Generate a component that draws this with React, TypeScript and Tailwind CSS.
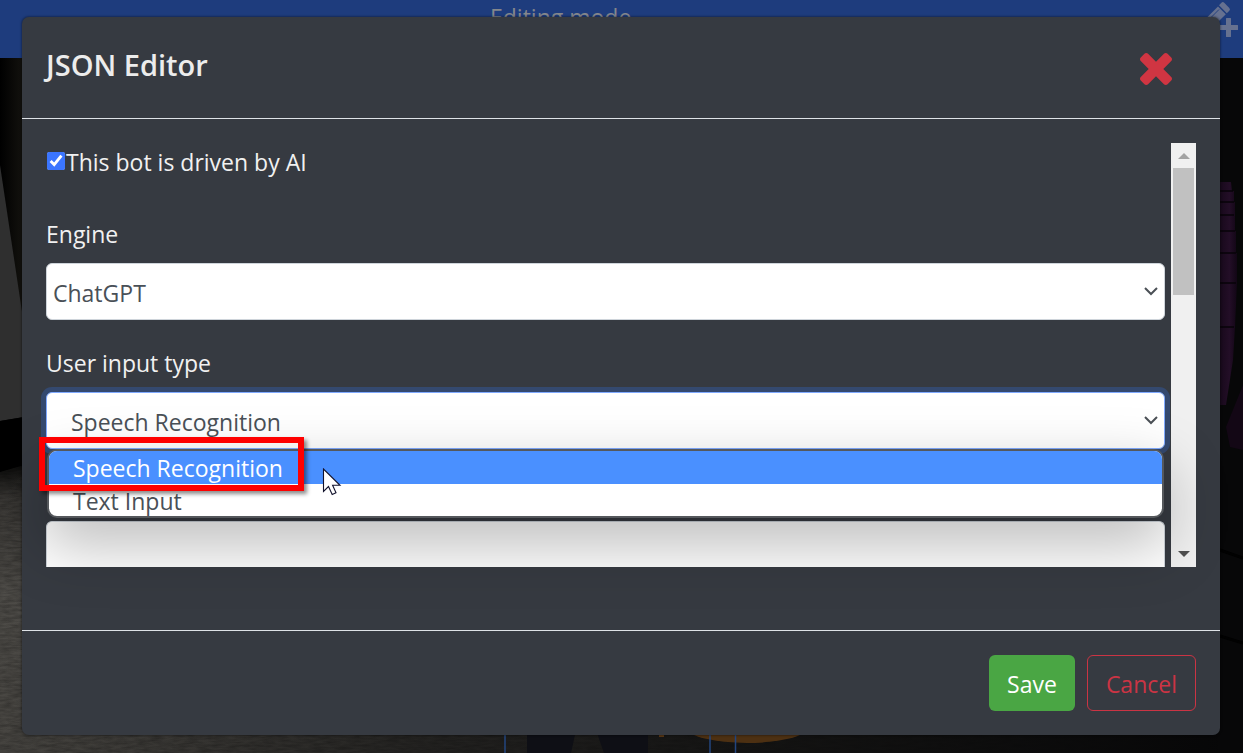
import React, { useState } from "react";

function Scene() {
  return (
    <svg
      aria-hidden="true"
      className="absolute inset-0 h-full w-full"
      viewBox="0 0 1243 753"
      preserveAspectRatio="none"
    >
      <defs>
        <linearGradient id="floor" x1="0" y1="0" x2="0" y2="1">
          <stop offset="0" stopColor="#0c0c0b" />
          <stop offset="0.12" stopColor="#3a3835" />
          <stop offset="0.45" stopColor="#4e4c48" />
          <stop offset="1" stopColor="#464440" />
        </linearGradient>
        <linearGradient id="floorFade" x1="0" y1="0" x2="1" y2="0">
          <stop offset="0" stopColor="#050505" stopOpacity="0" />
          <stop offset="0.35" stopColor="#0a0a0a" stopOpacity="0.6" />
          <stop offset="0.6" stopColor="#0b0b0b" stopOpacity="0.85" />
          <stop offset="1" stopColor="#060607" stopOpacity="1" />
        </linearGradient>
        <linearGradient id="wall" x1="0" y1="0" x2="1" y2="0">
          <stop offset="0" stopColor="#000000" />
          <stop offset="1" stopColor="#14130f" />
        </linearGradient>
        <linearGradient id="seat" x1="0" y1="0" x2="1" y2="0">
          <stop offset="0" stopColor="#150818" />
          <stop offset="0.6" stopColor="#230e27" />
          <stop offset="1" stopColor="#120615" />
        </linearGradient>
        <filter id="grain" x="0" y="0" width="100%" height="100%">
          <feTurbulence type="fractalNoise" baseFrequency="0.08 0.4" numOctaves="3" />
          <feColorMatrix values="0 0 0 0 0  0 0 0 0 0  0 0 0 0 0  0.9 0 0 0 -0.25" />
        </filter>
      </defs>
      <rect width="1243" height="753" fill="#060607" />
      <rect y="58" width="24" height="262" fill="url(#wall)" />
      <path d="M0 165 L24 325 L24 417 L0 421 Z" fill="#2f2f2f" />
      <path d="M0 421 L24 417 L24 470 L0 474 Z" fill="#000" />
      <path d="M0 472 L24 465 L1243 465 L1243 753 L0 753 Z" fill="url(#floor)" />
      <rect y="465" width="1243" height="288" filter="url(#grain)" opacity="0.5" />
      <rect y="465" width="1243" height="288" fill="url(#floorFade)" />
      <path d="M527 730 H576 L571 753 H527 Z M596 730 H648 V753 H604 Z" fill="#0e0f15" />
      <ellipse cx="747" cy="728" rx="60" ry="15" fill="#4d3012" />
      <path d="M659 735 h5 v2 h-5 Z" fill="#5a3815" />
      <path d="M505 730 V753 M710 730 V753 M735.500 730 V753" stroke="#23457f" strokeWidth="1.5" />
      <rect x="1218" y="58" width="25" height="695" fill="#070708" />
      <path d="M1218 182 h13 l1 9 h2 l0 11 h1 v13 h0 v16 h1 v22 h1 v30 l-2 44 l-2 33 l-7 45 h-7 Z" fill="url(#seat)" />
      <path
        d="M1219 191 h14 M1219 202 h15 M1219 215 h15 M1219 231 h16 M1219 253 h17 M1219 283 h17 M1219 327 h15"
        stroke="#070308"
        strokeWidth="1.5"
        fill="none"
      />
      <path d="M1243 385 L1226 427 L1230 447 L1243 450 Z" fill="#130715" />
      <path d="M1220 550 L1243 558 M1220 636 L1243 643" stroke="#010101" strokeWidth="3" />
    </svg>
  );
}

function Chevron() {
  return (
    <svg
      aria-hidden="true"
      className="pointer-events-none absolute top-6 right-[7px] h-[9px] w-[14px]"
      viewBox="0 0 14 9"
      fill="none"
      stroke="#4b5056"
      strokeWidth="2"
    >
      <path d="M1 1 L7 7 L13 1" />
    </svg>
  );
}

function ScrollBar() {
  return (
    <div aria-hidden="true" className="flex w-[25px] shrink-0 flex-col items-stretch bg-[#f0f0f0]">
      <div className="flex h-[25px] items-center justify-center">
        <svg className="h-[6px] w-[12px]" viewBox="0 0 12 6">
          <path d="M0 6 L6 0 L12 6 Z" fill="#a3a3a3" />
        </svg>
      </div>
      <div className="mx-[2px] h-[127px] bg-[#c1c1c1]" />
      <div className="flex-1" />
      <div className="flex h-[27px] items-center justify-center">
        <svg className="h-[6px] w-[12px]" viewBox="0 0 12 6">
          <path d="M0 0 L6 6 L12 0 Z" fill="#505050" />
        </svg>
      </div>
    </div>
  );
}

export default function App() {
  const [driven, setDriven] = useState(true);
  const [engine, setEngine] = useState("ChatGPT");
  const [inputType, setInputType] = useState("Speech Recognition");

  return (
    <div className="relative min-h-screen overflow-hidden bg-black font-['Open_Sans','Noto_Sans',sans-serif] text-[23px] leading-9 text-[#f1f1f1]">
      <Scene />
      <header className="absolute inset-x-0 top-0 h-[58px] bg-[#1e3c7d]">
        <p className="ml-[490px] leading-[34px] text-[#85878c]">Editing mode</p>
        <svg aria-hidden="true" className="absolute top-0 right-0 h-10 w-10" viewBox="0 0 40 40" fill="#667190">
          <path d="M18.400 2.800 Q19.800 1.400 21.200 2.800 L26.300 7.900 Q27.700 9.300 26.300 10.700 L23.800 13.200 L16 5.200 Z" />
          <path d="M15 6.500 L22.800 14.300 L12 25 L2 27 L4 17.500 Z" />
          <path d="M7.500 18 L16 9.500" stroke="#1e3c7d" strokeWidth="0.9" />
          <path d="M23.500 18 h4 q0.500 0 0.500 0.500 V25 h6.500 q0.500 0 0.500 0.500 v4 q0 0.500 -0.500 0.500 H28 v6.500 q0 0.500 -0.500 0.500 h-4 q-0.500 0 -0.500 -0.500 V30 h-6 v-5 h6 v-6.500 q0 -0.500 0.500 -0.500 Z" />
        </svg>
      </header>

      <div className="relative pt-[17px] pr-[23px] pl-[22px]">
        <section
          role="dialog"
          aria-labelledby="dialog-title"
          className="rounded-[7px] bg-[#363a41] shadow-[0_0_2px_1px_rgba(0,0,0,0.3)]"
        >
          <div className="flex h-[102px] items-start justify-between border-b border-[#dee2e6] pt-[30px] pr-12 pl-6">
            <h1 id="dialog-title" className="text-[29px] font-semibold text-[#ececec]">
              JSON Editor
            </h1>
            <button type="button" aria-label="Close" className="mt-[6px] text-[#d03542]">
              <svg className="h-8 w-8" viewBox="110 366 1188 1188" fill="currentColor">
                <path d="M1298 1322q0 40-28 68l-136 136q-28 28-68 28t-68-28l-294-294-294 294q-28 28-68 28t-68-28l-136-136q-28-28-28-68t28-68l294-294-294-294q-28-28-28-68t28-68l136-136q28-28 68-28t68 28l294 294 294-294q28-28 68-28t68 28l136 136q28 28 28 68t-28 68l-294 294 294 294q28 28 28 68z" />
              </svg>
            </button>
          </div>

          <div className="px-6 pt-6 pb-[63px]">
            <div className="flex gap-[6px]">
              <form className="min-w-0 flex-1">
                <label className="flex h-9 items-center leading-[38px]">
                  <input
                    type="checkbox"
                    checked={driven}
                    onChange={(e) => setDriven(e.target.checked)}
                    className="m-px h-[18px] w-[18px] accent-[#3b75ff]"
                  />
                  <span className="pt-[2px]">This bot is driven by AI</span>
                </label>

                <label htmlFor="engine" className="mt-9 block leading-[38px]">
                  Engine
                </label>
                <div className="relative mt-[10px]">
                  <select
                    id="engine"
                    value={engine}
                    onChange={(e) => setEngine(e.target.value)}
                    className="block h-[57px] w-full appearance-none rounded-md border border-[#ced4da] bg-white pt-[2px] pr-8 pl-[6px] text-[#495057]"
                  >
                    <option>ChatGPT</option>
                  </select>
                  <Chevron />
                </div>

                <label htmlFor="input-type" className="mt-6 block leading-[38px]">
                  User input type
                </label>
                <div className="relative z-10 mt-[10px]">
                  <select
                    id="input-type"
                    value={inputType}
                    onChange={(e) => setInputType(e.target.value)}
                    className="block h-[57px] w-full appearance-none rounded-md border border-[#80aaff] bg-white pt-[2px] pr-8 pl-6 text-[#495057] shadow-[0_0_0_5px_#34496f] outline-none"
                  >
                    <option>Speech Recognition</option>
                    <option>Text Input</option>
                  </select>
                  <Chevron />
                  <div className="absolute inset-x-[1px] top-[57px] rounded-[10px] border-2 border-[#55585c] bg-white shadow-[0_24px_60px_4px_rgba(0,0,0,0.26)]">
                    <ul role="listbox" aria-label="User input type" className="overflow-hidden rounded-[8px] leading-[34px]">
                      <li role="option" aria-selected="true" className="h-[33px] bg-[#4a90ff] pl-6 text-white">
                        Speech Recognition
                      </li>
                      <li role="option" aria-selected="false" className="h-[32px] pl-6 text-[#495057]">
                        Text Input
                      </li>
                    </ul>
                  </div>
                  <div className="pointer-events-none absolute top-[45px] left-[-7px] h-[54px] w-[265px] border-6 border-[#fe0000] shadow-[3px_3px_4px_rgba(0,0,0,0.45)]" />
                  <svg
                    aria-hidden="true"
                    className="pointer-events-none absolute top-[76px] left-[276px] h-7 w-5"
                    viewBox="0 0 20 28"
                  >
                    <path
                      d="M1.500 1 V23.500 L6.500 18.500 L10.200 26.500 L14 24.800 L10.600 17.300 H18 Z"
                      fill="#fff"
                      stroke="#12122c"
                      strokeWidth="1.100"
                    />
                  </svg>
                </div>

                <input
                  type="text"
                  aria-label="Value"
                  className="mt-[72px] block h-[46px] w-full rounded-t-md border border-b-0 border-[#ced4da] bg-white px-3 text-[#495057]"
                />
              </form>
              <ScrollBar />
            </div>
          </div>

          <div className="flex justify-end gap-3 border-t border-[#dee2e6] p-6">
            <button type="button" className="h-14 rounded-md bg-[#4aa644] px-[18px] pt-[2px] font-medium text-white">
              Save
            </button>
            <button type="button" className="h-14 rounded-md border border-[#cb3444] px-[18px] pt-[2px] text-[#cb3444]">
              Cancel
            </button>
          </div>
        </section>
      </div>
    </div>
  );
}
